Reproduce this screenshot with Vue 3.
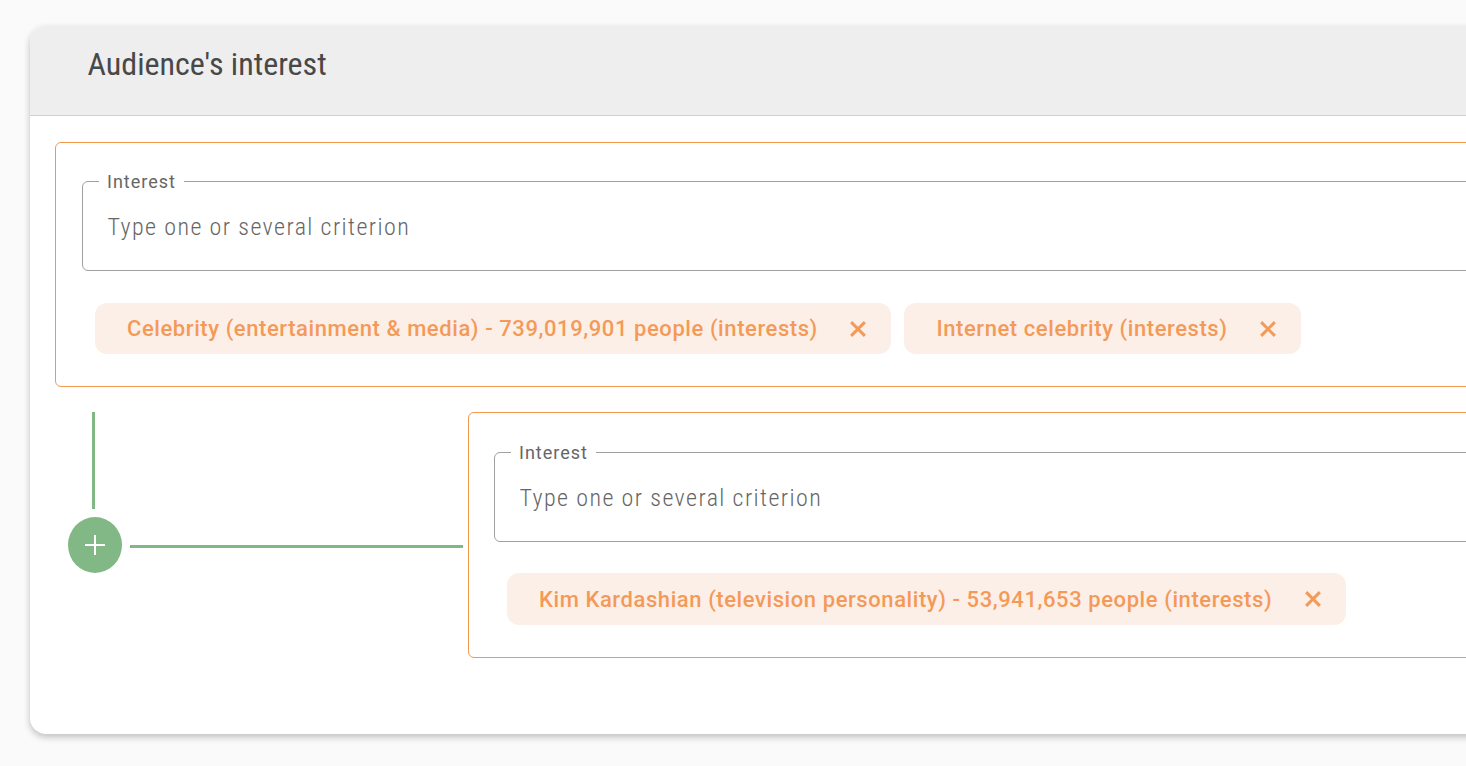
<script setup>
const firstChips = [
  'Celebrity (entertainment & media) - 739,019,901 people (interests)',
  'Internet celebrity (interests)'
]
const secondChips = ['Kim Kardashian (television personality) - 53,941,653 people (interests)']
</script>

<template>
  <div class="page">
    <section class="card">
      <header class="head"><h1>Audience's interest</h1></header>
      <div class="body">
        <div class="group first">
          <fieldset class="field">
            <legend>Interest</legend>
            <div class="placeholder">Type one or several criterion</div>
          </fieldset>
          <div class="chips">
            <span v-for="c in firstChips" :key="c" class="chip">
              <span>{{ c }}</span>
              <svg class="x" viewBox="0 0 14 14"><path d="M1 1l12 12M13 1L1 13" /></svg>
            </span>
          </div>
        </div>
        <div class="next">
          <div class="connector">
            <div class="vline"></div>
            <div class="hrow">
              <div class="plus">
                <svg viewBox="0 0 20 20"><path d="M10 0v20M0 10h20" /></svg>
              </div>
              <div class="hline"></div>
            </div>
          </div>
          <div class="group second">
            <fieldset class="field">
              <legend>Interest</legend>
              <div class="placeholder">Type one or several criterion</div>
            </fieldset>
            <div class="chips">
              <span v-for="c in secondChips" :key="c" class="chip tall">
                <span>{{ c }}</span>
                <svg class="x" viewBox="0 0 14 14"><path d="M1 1l12 12M13 1L1 13" /></svg>
              </span>
            </div>
          </div>
        </div>
      </div>
    </section>
  </div>
</template>

<style>
html, body { margin: 0; background: #fafafa; overflow: hidden; }
</style>

<style scoped>
.page {
  width: 1466px;
  height: 766px;
  overflow: hidden;
  background: #fafafa;
  padding: 26px 0 0 30px;
  box-sizing: border-box;
  font-family: Roboto, "Liberation Sans", sans-serif;
}
.card {
  width: 1520px;
  height: 708px;
  box-sizing: border-box;
  background: #fff;
  border-radius: 16px;
  box-shadow: 0 3px 7px rgba(0, 0, 0, 0.24);
  overflow: hidden;
}
.head {
  height: 90px;
  box-sizing: border-box;
  background: #eeeeee;
  border-bottom: 1px solid #d0d0d0;
  padding: 18px 0 0 57.5px;
}
h1 {
  margin: 0;
  font-size: 32px;
  line-height: 40px;
  font-weight: 400;
  font-stretch: 75%;
  color: #484848;
}
.body { padding: 26px 0 0 25px; }
.group {
  box-sizing: border-box;
  border: 1px solid #f2994f;
  border-radius: 6px;
  background: #fff;
}
.first { height: 245px; padding: 28px 0 0 26px; }
.second { width: 1040px; height: 246px; padding: 29px 0 0 25px; }
.field {
  margin: -1px 0 0;
  height: 101px;
  box-sizing: border-box;
  padding: 0 0 0 16px;
  border: 1px solid #a0a0a0;
  border-radius: 6px;
  min-width: 0;
}
legend {
  padding: 2px 8px 0;
  font-size: 18px;
  line-height: 20px;
  letter-spacing: 1px;
  color: #666;
}
.placeholder {
  margin: 20px 0 0 8.5px;
  font-size: 24px;
  line-height: 30px;
  font-weight: 300;
  font-stretch: 75%;
  letter-spacing: 1.4px;
  color: #666;
}
.chips { display: flex; gap: 13px; margin: 32px 0 0 13px; }
.second .chips { margin-top: 31px; }
.chip {
  height: 51px;
  display: inline-flex;
  align-items: center;
  gap: 32.5px;
  padding: 0 25px 0 32px;
  box-sizing: border-box;
  background: #fcefe8;
  border-radius: 12px;
  color: #f49a58;
  font-size: 22px;
  font-weight: 500;
  letter-spacing: 0.578px;
  white-space: nowrap;
}
.chip.tall { height: 52px; }
.x { width: 16px; height: 16px; flex: none; }
.x path { fill: none; stroke: #f49a58; stroke-width: 2.6; }
.next { display: flex; margin-top: 25px; }
.connector { width: 413px; flex: none; }
.vline { width: 3px; height: 97px; margin-left: 37px; background: #82b886; }
.hrow { display: flex; align-items: flex-start; margin: 8px 0 0 13px; }
.plus {
  width: 54px;
  height: 56px;
  flex: none;
  border-radius: 50%;
  background: #82b886;
  display: flex;
  align-items: center;
  justify-content: center;
}
.plus svg { width: 20px; height: 20px; }
.plus path { fill: none; stroke: #fff; stroke-width: 2; }
.hline { width: 333px; height: 3px; margin: 28px 0 0 8px; background: #82b886; }
</style>
